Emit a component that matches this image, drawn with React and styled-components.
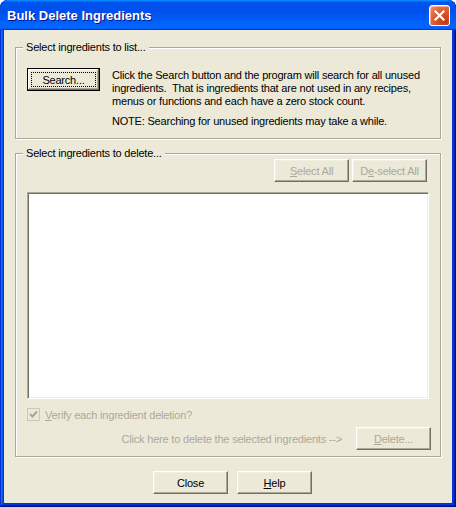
import React from "react";
import styled, { createGlobalStyle, css } from "styled-components";

const GlobalStyle = createGlobalStyle`
  html, body {
    margin: 0;
    padding: 0;
    background: #ffffff;
  }
  body {
    font-family: "Liberation Sans", Arial, sans-serif;
    font-size: 11px;
    letter-spacing: -0.2px;
  }
`;

const Window = styled.div`
  width: 456px;
  height: 507px;
  box-sizing: border-box;
  display: flex;
  flex-direction: column;
  background: #0831d9;
  border-radius: 8px 8px 0 0;
  overflow: hidden;
  box-shadow: inset -1px -1px #00138c, inset 1px 1px #0831d9,
    inset -2px -2px #001ea0, inset 2px 2px #166aee, inset -3px -3px #003bda,
    inset 3px 3px #0855dd;
`;

const TitleBar = styled.div`
  height: 30px;
  flex: none;
  display: flex;
  align-items: center;
  justify-content: space-between;
  padding: 0 6px 0 7px;
  box-sizing: border-box;
  background: linear-gradient(
    180deg,
    #0997ff,
    #0053ee 8%,
    #0050ee 40%,
    #0066ff 88%,
    #0066ff 93%,
    #005bff 95%,
    #003dd7 96%,
    #003dd7
  );
  border-radius: 8px 8px 0 0;
`;

const Title = styled.span`
  color: #ffffff;
  font-family: "Liberation Sans", Arial, sans-serif;
  font-weight: bold;
  font-size: 13px;
  letter-spacing: 0;
  text-shadow: 1px 1px #0f1089;
  padding-top: 1px;
`;

const CloseButton = styled.div`
  width: 21px;
  height: 21px;
  box-sizing: border-box;
  border: 1px solid #ffffff;
  border-radius: 3px;
  display: flex;
  align-items: center;
  justify-content: center;
  background: radial-gradient(
    circle at 80% 85%,
    #c23b12 0%,
    #d8542a 45%,
    #e2744f 75%,
    #f0a58b 100%
  );
  box-shadow: inset 1px 1px rgba(255, 210, 190, 0.6);
`;

const Client = styled.div`
  flex: 1;
  margin: 0 4px 4px;
  background: #ece9d8;
  padding: 17px 11px 9px;
  display: flex;
  flex-direction: column;
  color: #000000;
`;

const Group = styled.div`
  position: relative;
  box-sizing: border-box;
  height: ${(p) => p.$height}px;
  margin-top: ${(p) => p.$top || 0}px;
  border: 1px solid #aca899;
  box-shadow: inset 1px 1px #ffffff, 1px 1px #ffffff;
  display: flex;
  flex-direction: column;
`;

const GroupLabel = styled.span`
  position: absolute;
  top: -7px;
  left: 7px;
  padding: 0 3px;
  background: #ece9d8;
  line-height: 13px;
`;

const SearchRow = styled.div`
  display: flex;
  align-items: flex-start;
  padding: 20px 0 0 11px;
  gap: 12px;
`;

const Info = styled.div`
  line-height: 13px;
  padding-top: 1px;
`;

const Note = styled.p`
  margin: 7px 0 0;
`;

const buttonFace = css`
  border-top: 1px solid #ffffff;
  border-left: 1px solid #ffffff;
  border-right: 1px solid #716f64;
  border-bottom: 1px solid #716f64;
  box-shadow: inset -1px -1px #aca899, inset 1px 1px #f1efe2;
`;

const defaultFace = css`
  border: 1px solid #000000;
  box-shadow: inset -1px -1px #716f64, inset 1px 1px #ffffff,
    inset -2px -2px #aca899, inset 2px 2px #f1efe2;
`;

const Button = styled.div`
  position: relative;
  box-sizing: border-box;
  flex: none;
  width: ${(p) => p.$width || 75}px;
  height: 23px;
  display: flex;
  align-items: center;
  justify-content: center;
  background: #ece9d8;
  color: ${(p) => (p.$disabled ? "#aca899" : "#000000")};
  ${(p) => (p.$default ? defaultFace : buttonFace)}
  ${(p) =>
    p.$focus &&
    css`
      &::after {
        content: "";
        position: absolute;
        inset: 3px;
        border: 1px dotted #000000;
      }
    `}
`;

const ButtonRow = styled.div`
  display: flex;
  justify-content: flex-end;
  gap: 3px;
  padding: 5px 13px 0 0;
`;

const ListBox = styled.div`
  margin: 10px 11px 0 11px;
  height: 207px;
  box-sizing: border-box;
  background: #ffffff;
  border-top: 1px solid #aca899;
  border-left: 1px solid #aca899;
  border-right: 1px solid #ffffff;
  border-bottom: 1px solid #ffffff;
  box-shadow: inset 1px 1px #716f64, inset -1px -1px #f1efe2;
`;

const CheckRow = styled.div`
  display: flex;
  align-items: center;
  gap: 5px;
  margin: 9px 0 0 11px;
  height: 13px;
  color: #aca899;
`;

const CheckBox = styled.div`
  width: 13px;
  height: 13px;
  box-sizing: border-box;
  border: 1px solid #cac8bb;
  background: #ece9d8;
  display: flex;
  align-items: center;
  justify-content: center;
`;

const DeleteRow = styled.div`
  display: flex;
  align-items: center;
  justify-content: flex-end;
  gap: 14px;
  margin-top: 6px;
  padding-right: 9px;
  color: #aca899;
`;

const Footer = styled.div`
  display: flex;
  gap: 9px;
  margin-top: 14px;
  padding-left: 138px;
`;

const App = () => {
  return (
    <>
      <GlobalStyle />
      <Window>
        <TitleBar>
          <Title>Bulk Delete Ingredients</Title>
          <CloseButton>
            <svg width="11" height="11" viewBox="0 0 11 11">
              <path
                d="M1.5 1.5 L9.5 9.5 M9.5 1.5 L1.5 9.5"
                stroke="#ffffff"
                strokeWidth="2.2"
                strokeLinecap="square"
              />
            </svg>
          </CloseButton>
        </TitleBar>
        <Client>
          <Group $height={92}>
            <GroupLabel>Select ingredients to list...</GroupLabel>
            <SearchRow>
              <Button $width={73} $default $focus>
                Search...
              </Button>
              <Info>
                Click the Search button and the program will search for all unused
                <br />
                ingredients.&nbsp; That is ingredients that are not used in any recipes,
                <br />
                menus or functions and each have a zero stock count.
                <Note>NOTE: Searching for unused ingredients may take a while.</Note>
              </Info>
            </SearchRow>
          </Group>

          <Group $height={304} $top={14}>
            <GroupLabel>Select ingredients to delete...</GroupLabel>
            <ButtonRow>
              <Button $disabled>
                <span>
                  <u>S</u>elect All
                </span>
              </Button>
              <Button $disabled>
                <span>
                  D<u>e</u>-select All
                </span>
              </Button>
            </ButtonRow>
            <ListBox />
            <CheckRow>
              <CheckBox>
                <svg width="9" height="9" viewBox="0 0 9 9">
                  <path
                    d="M1 4 L3.5 6.5 L8 1.5"
                    fill="none"
                    stroke="#aca899"
                    strokeWidth="2"
                  />
                </svg>
              </CheckBox>
              <span>
                <u>V</u>erify each ingredient deletion?
              </span>
            </CheckRow>
            <DeleteRow>
              <span>Click here to delete the selected ingredients --&gt;</span>
              <Button $disabled>
                <span>
                  <u>D</u>elete...
                </span>
              </Button>
            </DeleteRow>
          </Group>

          <Footer>
            <Button>Close</Button>
            <Button>
              <span>
                <u>H</u>elp
              </span>
            </Button>
          </Footer>
        </Client>
      </Window>
    </>
  );
};

export default App;
